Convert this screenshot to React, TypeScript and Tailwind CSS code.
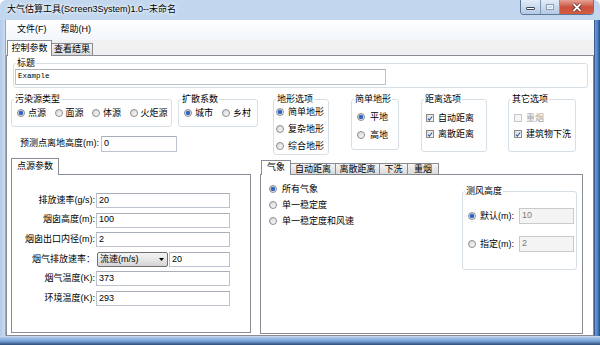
import clsx from 'clsx'
import type { ReactNode } from 'react'

function Radio({ checked = false, label, gap = 'gap-[3px]' }: { checked?: boolean; label: string; gap?: string }) {
  return (
    <div className={clsx('flex h-[14px] items-center whitespace-nowrap', gap)}>
      <span className="flex h-[8px] w-[8px] shrink-0 items-center justify-center rounded-full border border-[#8b8b8b] bg-linear-to-br from-[#d6d6d6] to-[#fcfcfc]">
        {checked && <span className="h-[4px] w-[4px] rounded-full bg-[#2a66cc] shadow-[0_0_1px_#0f3a86]" />}
      </span>
      <span className="leading-[14px]">{label}</span>
    </div>
  )
}

function Check({ checked = false, disabled = false, label }: { checked?: boolean; disabled?: boolean; label: string }) {
  return (
    <div className={clsx('flex h-[14px] items-center gap-[4px] whitespace-nowrap', disabled && 'text-[#a3a3a3]')}>
      <span
        className={clsx(
          'flex h-[8px] w-[8px] shrink-0 items-center justify-center border',
          disabled ? 'border-[#c8c8c8] bg-[#f5f5f5]' : 'border-[#8b8b8b] bg-linear-to-br from-[#dcdcdc] to-[#fcfcfc]',
        )}
      >
        {checked && (
          <svg width="7" height="7" viewBox="0 0 7 7">
            <path d="M1 3.6 L2.8 5.4 L6 1.2" fill="none" stroke="#3b5a9a" strokeWidth="1.3" />
          </svg>
        )}
      </span>
      <span className="leading-[14px]">{label}</span>
    </div>
  )
}

function Group({ title, className, children }: { title: string; className?: string; children?: ReactNode }) {
  return (
    <fieldset className={clsx('shrink-0 rounded-[3px] border border-[#d5dfe5]', className)}>
      <legend className="ml-[2px] px-[1px] text-[9px] leading-[12px]">{title}</legend>
      {children}
    </fieldset>
  )
}

function TextBox({ value, className, disabled = false, mono = false }: { value: string; className?: string; disabled?: boolean; mono?: boolean }) {
  return (
    <div
      className={clsx(
        'flex shrink-0 items-center border pl-[2px]',
        disabled ? 'border-[#cacaca] bg-[#f4f4f4] text-[#7a7a7a]' : 'border-[#bcc3cc] border-t-[#a9afb8] bg-white',
        mono ? "font-['Liberation_Mono',monospace] text-[7.5px]" : 'text-[9px]',
        className,
      )}
    >
      {value}
    </div>
  )
}

const params: [string, string | null][] = [
  ['排放速率(g/s):', '20'],
  ['烟囱高度(m):', '100'],
  ['烟囱出口内径(m):', '2'],
  ['烟气排放速率：', null],
  ['烟气温度(K):', '373'],
  ['环境温度(K):', '293'],
]

export default function App() {
  return (
    <div className="flex h-[345px] w-[600px] flex-col overflow-hidden rounded-t-[6px] bg-linear-to-b from-[#c3d8ef] to-[#a9c6e8] font-['Liberation_Sans','Noto_Sans_CJK_SC',sans-serif] text-[9px] text-black">
      {/* title bar */}
      <div className="flex h-[20px] shrink-0">
        <div className="flex flex-1 items-center pl-[7px] text-[9px] [text-shadow:0_0_5px_#fff,0_0_3px_#fff]">
          大气估算工具(Screen3System)1.0--未命名
        </div>
        <div className="mr-[6px] flex h-[15px] overflow-hidden rounded-b-[4px] border border-t-0 border-[#5e7898]">
          <div className="flex w-[20px] items-end justify-center border-r border-[#7f97b5] bg-linear-to-b from-[#e3ecf7] to-[#b3c9e4] pb-[4px]">
            <span className="h-[3px] w-[9px] rounded-[1px] border border-[#3e4957] bg-white" />
          </div>
          <div className="flex w-[19px] items-center justify-center border-r border-[#7f97b5] bg-linear-to-b from-[#e3ecf7] to-[#b3c9e4]">
            <span className="h-[6px] w-[8px] border border-[#8b9bb0] bg-transparent shadow-[inset_0_0_0_1px_#f2f6fb]" />
          </div>
          <div className="flex w-[33px] items-center justify-center bg-linear-to-b from-[#e6a296] via-[#c9533f] to-[#d65b3f]">
            <svg width="10" height="9" viewBox="0 0 10 9">
              <path d="M1.5 1 L8.5 8 M8.5 1 L1.5 8" stroke="#4a1c14" strokeWidth="3.2" />
              <path d="M1.5 1 L8.5 8 M8.5 1 L1.5 8" stroke="#fff" strokeWidth="1.8" />
            </svg>
          </div>
        </div>
      </div>

      <div className="flex flex-1">
        <div className="w-[6px] border-r border-[#90a9c8] bg-linear-to-r from-[#b2cbe8] to-[#c9dbf0]" />

        {/* client */}
        <div className="flex w-[588px] flex-col bg-[#f0f0f0]">
          <div className="flex h-[20px] items-center gap-[14px] bg-linear-to-b from-[#fdfeff] to-[#f3f6fa] pl-[11px]">
            <span>文件(F)</span>
            <span>帮助(H)</span>
          </div>
          <div className="flex h-[15px] items-end pl-[1px]">
            <div className="relative z-10 -mb-px flex h-[16px] w-[45px] items-center justify-center border border-b-0 border-[#898c95] bg-white">
              控制参数
            </div>
            <div className="flex h-[12px] w-[41px] items-center justify-center border border-b-0 border-l-0 border-[#898c95] bg-linear-to-b from-[#f5f5f5] to-[#d9d9d9]">
              查看结果
            </div>
          </div>

          {/* page */}
          <div className="relative z-0 flex flex-1 flex-col border border-[#898c95] bg-white">
            <Group title="标题" className="ml-[6px] mt-[1px] h-[31px] w-[575px]">
              <TextBox value="Example" mono className="ml-[1px] h-[16px] w-[371px]" />
            </Group>

            <div className="mt-[5px] flex items-start">
              <div className="ml-[4px] flex flex-col">
                <div className="flex">
                  <Group title="污染源类型" className="h-[34px] w-[161px]">
                    <div className="flex gap-[8.5px] pl-[5px] pt-[1px]">
                      <Radio checked label="点源" />
                      <Radio label="面源" />
                      <Radio label="体源" />
                      <Radio label="火炬源" />
                    </div>
                  </Group>
                  <Group title="扩散系数" className="ml-[6px] h-[34px] w-[80px]">
                    <div className="flex gap-[9px] pl-[5px] pt-[1px]">
                      <Radio checked label="城市" />
                      <Radio label="乡村" />
                    </div>
                  </Group>
                </div>
                <div className="mt-[9px] flex items-center pl-[9px]">
                  <span className="w-[81px] whitespace-nowrap">预测点离地高度(m):</span>
                  <TextBox value="0" className="h-[16px] w-[76px]" />
                </div>
              </div>

              <Group title="地形选项" className="ml-[15px] h-[62px] w-[56px]">
                <div className="flex flex-col gap-[3px] pl-[2px]">
                  <Radio checked label="简单地形" gap="gap-[4px]" />
                  <Radio label="复杂地形" gap="gap-[4px]" />
                  <Radio label="综合地形" gap="gap-[4px]" />
                </div>
              </Group>
              <Group title="简单地形" className="ml-[22px] h-[57px] w-[48px]">
                <div className="flex flex-col gap-[4px] pl-[5px] pt-[5px]">
                  <Radio checked label="平地" gap="gap-[5px]" />
                  <Radio label="高地" gap="gap-[5px]" />
                </div>
              </Group>
              <Group title="距离选项" className="ml-[22px] h-[59px] w-[66px]">
                <div className="flex flex-col gap-[2px] pl-[4px] pt-[6px]">
                  <Check checked label="自动距离" />
                  <Check checked label="离散距离" />
                </div>
              </Group>
              <Group title="其它选项" className="ml-[21px] h-[59px] w-[68px]">
                <div className="flex flex-col gap-[2px] pl-[5px] pt-[6px]">
                  <Check disabled label="重烟" />
                  <Check checked label="建筑物下洗" />
                </div>
              </Group>
            </div>

            <div className="mt-[3px] flex">
              {/* point source params */}
              <div className="ml-[4px] flex w-[240px] flex-col">
                <div className="flex h-[16px] items-end">
                  <div className="relative z-10 -mb-px flex h-[17px] w-[48px] items-center justify-center border border-b-0 border-[#898c95] bg-white">
                    点源参数
                  </div>
                </div>
                <div className="relative z-0 flex h-[159px] flex-col gap-[4.6px] border border-[#898c95] bg-white pt-[18px]">
                  {params.map(([label, value]) => (
                    <div key={label} className="flex h-[15px] items-center">
                      <span className="w-[83px] whitespace-nowrap text-right">{label}</span>
                      {value !== null ? (
                        <TextBox value={value} className="ml-[1px] h-[15px] w-[134px]" />
                      ) : (
                        <>
                          <div className="ml-[2px] flex h-[15px] w-[71px] items-center justify-between rounded-[2px] border border-[#707070] bg-linear-to-b from-[#f3f3f3] via-[#e6e6e6] to-[#d3d3d3] pl-[2px] pr-[3px]">
                            <span>流速(m/s)</span>
                            <svg width="5" height="3" viewBox="0 0 5 3">
                              <path d="M0 0 H5 L2.5 3 Z" fill="#000" />
                            </svg>
                          </div>
                          <TextBox value="20" className="ml-[1px] h-[15px] w-[61px]" />
                        </>
                      )}
                    </div>
                  ))}
                </div>
              </div>

              {/* result tabs */}
              <div className="ml-[9px] flex w-[323px] flex-col">
                <div className="flex h-[16px] items-end pl-[1px]">
                  <div className="relative z-10 -mb-px flex h-[15px] w-[30px] items-center justify-center border border-b-0 border-[#898c95] bg-white">
                    气象
                  </div>
                  {[
                    ['自动距离', 'w-[45px]'],
                    ['离散距离', 'w-[44px]'],
                    ['下洗', 'w-[28px]'],
                    ['重烟', 'w-[31px]'],
                  ].map(([t, w]) => (
                    <div
                      key={t}
                      className={clsx(
                        'flex h-[11px] items-center justify-center border border-b-0 border-l-0 border-[#898c95] bg-linear-to-b from-[#f5f5f5] to-[#dadada] leading-[10px]',
                        w,
                      )}
                    >
                      {t}
                    </div>
                  ))}
                </div>
                <div className="relative z-0 flex h-[160px] border border-[#898c95] bg-white">
                  <div className="flex flex-1 flex-col gap-[2px] pl-[8px] pt-[7px]">
                    <Radio checked label="所有气象" gap="gap-[5px]" />
                    <Radio label="单一稳定度" gap="gap-[5px]" />
                    <Radio label="单一稳定度和风速" gap="gap-[5px]" />
                  </div>
                  <Group title="测风高度" className="mr-[5px] mt-[10px] h-[85px] w-[115px]">
                    <div className="flex flex-col pl-[5px] pr-[2px] pt-[11px]">
                      <div className="flex h-[16px] items-center justify-between">
                        <Radio checked label="默认(m):" gap="gap-[4px]" />
                        <TextBox disabled value="10" className="h-[16px] w-[55px]" />
                      </div>
                      <div className="mt-[12px] flex h-[16px] items-center justify-between">
                        <Radio label="指定(m):" gap="gap-[4px]" />
                        <TextBox disabled value="2" className="h-[16px] w-[55px]" />
                      </div>
                    </div>
                  </Group>
                </div>
              </div>
            </div>
          </div>
        </div>

        <div className="w-[6px] border-l border-[#3a5d8c] bg-linear-to-r from-[#6f9bd6] via-[#4a80cc] to-[#2a4b78]" />
      </div>

      <div className="h-[9px] shrink-0 border-t border-[#c9d8ea] bg-linear-to-b from-[#b0cbec] via-[#7aa3d8] to-[#2f4d78]" />
    </div>
  )
}
